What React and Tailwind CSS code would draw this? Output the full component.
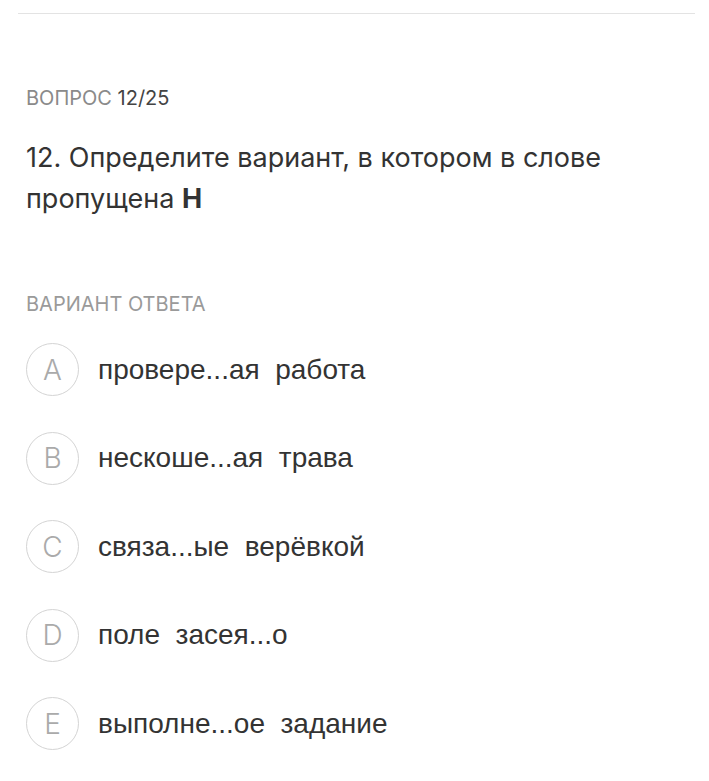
export default function App() {
  const opts = [
    ["A", "провере...ая  работа"],
    ["B", "нескоше...ая  трава"],
    ["C", "связа...ые  верёвкой"],
    ["D", "поле  засея...о"],
    ["E", "выполне...ое  задание"],
  ];
  return (
    <div className="w-[709px] h-[781px] bg-white overflow-hidden" style={{ fontFamily: "Inter, 'Noto Sans', sans-serif" }}>
      <div className="pt-[13px] px-[18px]">
        <div className="h-px bg-[#e3e3e3] w-[677px]" />
      </div>
      <div className="px-[26px]">
        <div className="mt-[74px] text-[20px] leading-[20px] text-[#8a8a8a]">
          ВОПРОС <span className="text-[#444]">12/25</span>
        </div>
        <div className="mt-[29px] text-[27px] leading-[41px] text-[#333]">
          12. Определите вариант, в котором в слове пропущена <b className="font-bold">Н</b>
        </div>
        <div className="mt-[75px] text-[20px] leading-[20px] text-[#9a9a9a]">ВАРИАНТ ОТВЕТА</div>
        <div className="mt-[29px] flex flex-col gap-[35.5px]">
          {opts.map(([l, t]) => (
            <div key={l} className="flex items-center h-[53px]">
              <div className="w-[53px] h-[53px] shrink-0 rounded-full border border-[#d4d4d4] flex items-center justify-center text-[28px] text-[#aaaaaa] font-light">
                {l}
              </div>
              <div className="ml-[19px] text-[28px] text-[#333] whitespace-pre" style={{ fontFamily: "'Liberation Sans', Arial, sans-serif" }}>
                {t}
              </div>
            </div>
          ))}
        </div>
      </div>
    </div>
  );
}
